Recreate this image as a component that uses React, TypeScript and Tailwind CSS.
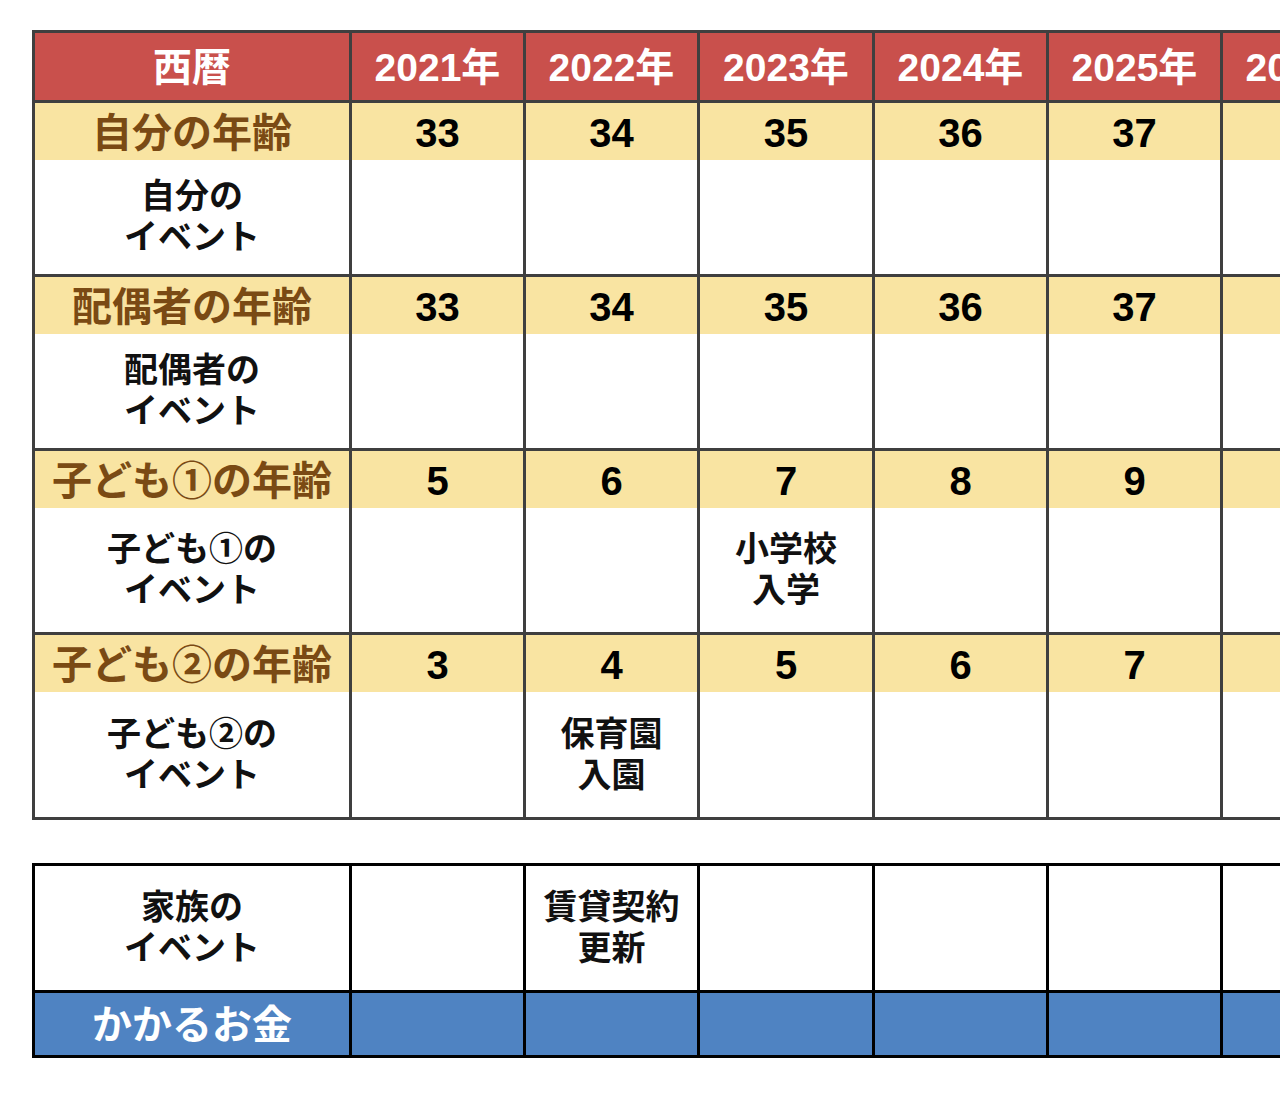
const FONT = { fontFamily: '"Liberation Sans", "Noto Sans CJK JP", sans-serif' };

const YEARS = ["2021年", "2022年", "2023年", "2024年", "2025年", "2026年"];
// column widths of the year columns (border 3px between each)
const COL_W = ["w-[171px]", "w-[171px]", "w-[172px]", "w-[171px]", "w-[171px]", "w-[171px]"];

interface Group {
  ageLabel: string;
  ages: string[];
  eventLabel: [string, string];
  events: (string[] | null)[];
  eventH: string;
}

// 7列目は画面外にはみ出すので年齢は空
const GROUPS: Group[] = [
  {
    ageLabel: "自分の年齢",
    ages: ["33", "34", "35", "36", "37", ""],
    eventLabel: ["自分の", "イベント"],
    events: [null, null, null, null, null, null],
    eventH: "h-[114px]",
  },
  {
    ageLabel: "配偶者の年齢",
    ages: ["33", "34", "35", "36", "37", ""],
    eventLabel: ["配偶者の", "イベント"],
    events: [null, null, null, null, null, null],
    eventH: "h-[114px]",
  },
  {
    ageLabel: "子ども①の年齢",
    ages: ["5", "6", "7", "8", "9", ""],
    eventLabel: ["子ども①の", "イベント"],
    events: [null, null, ["小学校", "入学"], null, null, null],
    eventH: "h-[124px]",
  },
  {
    ageLabel: "子ども②の年齢",
    ages: ["3", "4", "5", "6", "7", ""],
    eventLabel: ["子ども②の", "イベント"],
    events: [null, ["保育園", "入園"], null, null, null, null],
    eventH: "h-[125px]",
  },
];

function TwoLines({ lines }: { lines: string[] }) {
  return (
    <div className="text-[34px] leading-[41px] font-bold text-[#111] text-center">
      {lines.map((l, i) => (
        <div key={i}>{l}</div>
      ))}
    </div>
  );
}

export default function App() {
  return (
    <div className="w-[1280px] h-[1099px] overflow-hidden bg-white" style={FONT}>
      <div className="pt-[30px] pl-[32px]">
        {/* 上の表 */}
        <div className="w-max border-[3px] border-[#3f3f3f]">
          {/* 西暦 */}
          <div className="flex h-[67px] bg-[#c9504c] text-white text-[39px] font-bold">
            <div className="w-[314px] flex items-center justify-center pt-[3px]">西暦</div>
            {YEARS.map((y, i) => (
              <div
                key={y}
                className={`${COL_W[i]} box-content border-l-[3px] border-[#3f3f3f] flex items-center justify-center pt-[3px] whitespace-nowrap`}
              >
                {y}
              </div>
            ))}
          </div>

          {GROUPS.map((g) => (
            <div key={g.ageLabel} className="border-t-[3px] border-[#3f3f3f]">
              <div className="flex h-[57px] bg-[#f9e4a2]">
                <div className="w-[314px] flex items-center justify-center pt-[3px] text-[40px] font-bold text-[#7a4a14]">
                  {g.ageLabel}
                </div>
                {g.ages.map((a, i) => (
                  <div
                    key={i}
                    className={`${COL_W[i]} box-content border-l-[3px] border-[#3f3f3f] flex items-center justify-center pt-[3px] text-[40px] font-bold text-black`}
                  >
                    {a}
                  </div>
                ))}
              </div>
              <div className={`flex ${g.eventH} bg-white`}>
                <div className="w-[314px] flex items-center justify-center">
                  <TwoLines lines={g.eventLabel} />
                </div>
                {g.events.map((e, i) => (
                  <div
                    key={i}
                    className={`${COL_W[i]} box-content border-l-[3px] border-[#3f3f3f] flex items-center justify-center`}
                  >
                    {e && <TwoLines lines={e} />}
                  </div>
                ))}
              </div>
            </div>
          ))}
        </div>

        {/* 下の表 */}
        <div className="mt-[43px] w-max border-[3px] border-black">
          <div className="flex h-[124px] bg-white">
            <div className="w-[314px] flex items-center justify-center">
              <TwoLines lines={["家族の", "イベント"]} />
            </div>
            {YEARS.map((y, i) => (
              <div
                key={y}
                className={`${COL_W[i]} box-content border-l-[3px] border-black flex items-center justify-center`}
              >
                {i === 1 && <TwoLines lines={["賃貸契約", "更新"]} />}
              </div>
            ))}
          </div>
          <div className="flex h-[62px] bg-[#4f83c2] border-t-[3px] border-black box-content">
            <div className="w-[314px] flex items-center justify-center pt-[2px] text-[40px] font-bold text-white">
              かかるお金
            </div>
            {YEARS.map((y, i) => (
              <div key={y} className={`${COL_W[i]} box-content border-l-[3px] border-black`} />
            ))}
          </div>
        </div>
      </div>
    </div>
  );
}
